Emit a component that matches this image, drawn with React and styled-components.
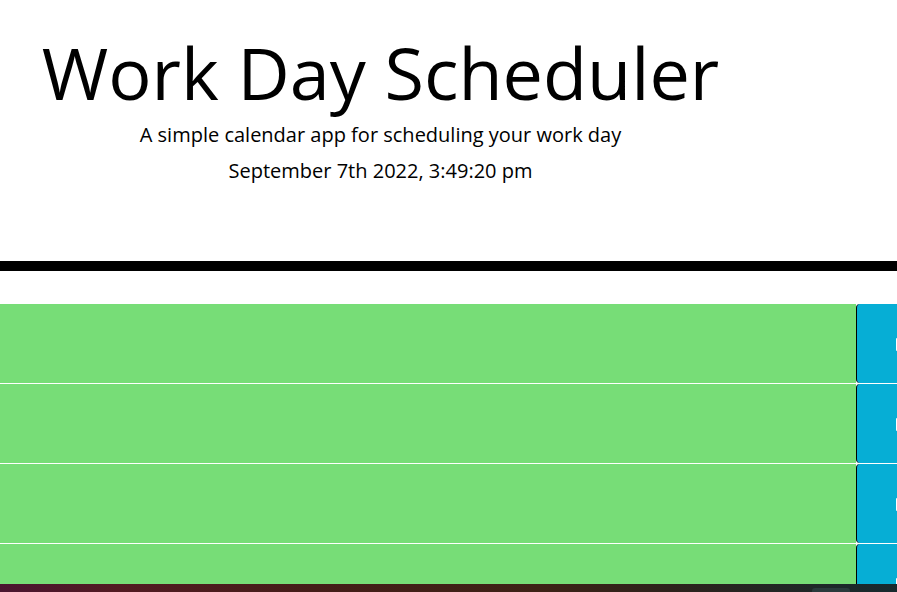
import React from "react";
import styled, { createGlobalStyle } from "styled-components";

const Global = createGlobalStyle`
  html, body { margin: 0; padding: 0; background: #ffffff; overflow: hidden; }
  body { font-family: "Open Sans", "Noto Sans", sans-serif; color: #000; }
  *, *::before, *::after { box-sizing: border-box; }
`;

const Page = styled.div`
  width: 897px;
  height: 592px;
  display: flex;
  flex-direction: column;
  overflow: hidden;
`;

const Jumbotron = styled.header`
  padding-top: 29px;
  padding-bottom: 0;
  height: 271px;
  border-bottom: 10px solid #000;
  margin-bottom: 32px;
  flex-shrink: 0;
`;

const HeaderInner = styled.div`
  width: 761px;
  text-align: center;
`;

const Title = styled.h1`
  margin: 0;
  font-size: 72px;
  font-weight: 400;
  line-height: 86px;
  letter-spacing: 0;
`;

const Lead = styled.p`
  margin: 5px 0 0;
  font-size: 20px;
  line-height: 30px;
`;

const CurrentDay = styled.p`
  margin: 6px 0 0;
  font-size: 20px;
  line-height: 30px;
`;

const Rows = styled.div`
  flex: 1;
  display: flex;
  flex-direction: column;
  overflow: hidden;
`;

const Row = styled.div`
  display: flex;
  height: 80px;
  flex-shrink: 0;
  border-top: 1px solid #ffffff;
`;

const colors = { past: "#d3d3d3", present: "#ff6961", future: "#77dd77" };

const Task = styled.textarea`
  flex: 0 0 856px;
  margin: 0;
  border: none;
  resize: none;
  padding: 10px;
  background: ${(p) => colors[p.$state]};
  color: #000;
  font-family: inherit;
  font-size: 16px;
  outline: none;
`;

const SaveBtn = styled.button`
  flex: 0 0 60px;
  margin: 0;
  padding: 0;
  border: none;
  border-left: 1px solid #000;
  border-radius: 4px 0 0 4px;
  background: #06aed5;
  color: #fff;
  display: flex;
  align-items: center;
  justify-content: flex-start;
  padding-left: 39px;
  cursor: pointer;
`;

const SaveIcon = styled.span`
  display: block;
  width: 12px;
  height: 13px;
  margin-top: 2px;
  background: #ffffff;
  border-radius: 1px;
`;

const Taskbar = styled.div`
  height: 8px;
  flex-shrink: 0;
  display: flex;
  justify-content: flex-end;
  align-items: flex-end;
  padding-right: 47px;
  background: linear-gradient(
    90deg,
    #4a1530 0%,
    #521a22 13%,
    #441d18 35%,
    #3d2216 60%,
    #2c221c 75%,
    #172a2e 100%
  );
`;

const TaskbarItem = styled.div`
  width: 38px;
  height: 4px;
  border-radius: 3px 3px 0 0;
  background: #2a3a3c;
`;

const hours = ["future", "future", "future", "future"];

export default function App() {
  return (
    <Page>
      <Global />
      <Jumbotron>
        <HeaderInner>
          <Title>Work Day Scheduler</Title>
          <Lead>A simple calendar app for scheduling your work day</Lead>
          <CurrentDay>September 7th 2022, 3:49:20 pm</CurrentDay>
        </HeaderInner>
      </Jumbotron>
      <Rows>
        {hours.map((s, i) => (
          <Row key={i}>
            <Task $state={s} aria-label={`hour ${i + 9}`} />
            <SaveBtn aria-label="save">
              <SaveIcon />
            </SaveBtn>
          </Row>
        ))}
      </Rows>
      <Taskbar>
        <TaskbarItem />
      </Taskbar>
    </Page>
  );
}
